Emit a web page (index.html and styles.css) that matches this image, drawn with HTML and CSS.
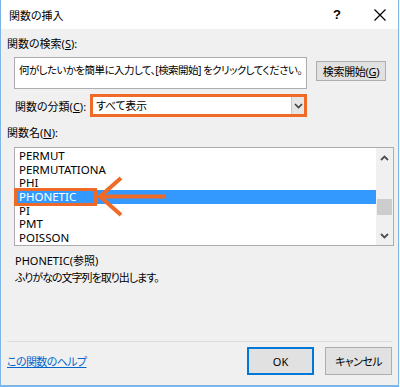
FILE: index.html
```html
<!DOCTYPE html>
<html lang="ja">
<head>
    <meta charset="UTF-8">
    <meta name="viewport" content="width=device-width, initial-scale=1.0">
    <title>関数の挿入</title>
    <link rel="stylesheet" href="styles.css">
</head>
<body>
    <div class="window">
        <div class="titlebar">
            <span class="title">関数の挿入</span>
            <span class="help">?</span>
            <span class="close">
                <svg width="12" height="12" viewBox="0 0 12 12"><path d="M0.5 0.5 L11.5 11.5 M11.5 0.5 L0.5 11.5" stroke="#000" stroke-width="1.2" fill="none"/></svg>
            </span>
        </div>

        <div class="content">
            <div class="label">関数の検索(<u>S</u>):</div>
            <div class="search-row">
                <div class="textbox">何がしたいかを簡単に入力して、[検索開始] をクリックしてください。</div>
                <div class="button search-btn">検索開始(<u>G</u>)</div>
            </div>

            <div class="category-row">
                <span class="category-label">関数の分類(<u>C</u>):</span>
                <div class="dropdown">
                    <span class="dropdown-text">すべて表示</span>
                    <span class="dropdown-arrow">
                        <svg width="9" height="6" viewBox="0 0 9 6"><path d="M1 1 L4.5 4.5 L8 1" stroke="#404040" stroke-width="1.6" fill="none"/></svg>
                    </span>
                </div>
            </div>

            <div class="label names-label">関数名(<u>N</u>):</div>
            <div class="list-area">
                <div class="listbox">
                    <ul class="items">
                        <li>PERMUT</li>
                        <li>PERMUTATIONA</li>
                        <li>PHI</li>
                        <li class="selected">PHONETIC</li>
                        <li>PI</li>
                        <li>PMT</li>
                        <li>POISSON</li>
                    </ul>
                    <div class="scrollbar">
                        <svg class="scroll-up" width="9" height="6" viewBox="0 0 9 6"><path d="M1 5 L4.5 1.5 L8 5" stroke="#505050" stroke-width="1.8" fill="none"/></svg>
                        <div class="thumb"></div>
                        <svg class="scroll-down" width="9" height="6" viewBox="0 0 9 6"><path d="M1 1 L4.5 4.5 L8 1" stroke="#505050" stroke-width="1.8" fill="none"/></svg>
                    </div>
                </div>
                <div class="highlight-box"></div>
                <svg class="pointer-arrow" width="160" height="80" viewBox="0 0 160 80">
                    <path d="M86 49.5 H151" stroke="#ef6a27" stroke-width="4" fill="none"/>
                    <path d="M107 31 L86 49.5 L107 68" stroke="#ef6a27" stroke-width="4" fill="none" stroke-linejoin="miter"/>
                </svg>
            </div>

            <div class="description">
                <div>PHONETIC(参照)</div>
                <div class="jp">ふりがなの文字列を取り出します。</div>
            </div>
        </div>

        <div class="footer">
            <div class="separator"></div>
            <div class="footer-row">
                <a class="help-link" href="#">この関数のヘルプ</a>
                <div class="buttons">
                    <div class="button dialog-btn ok">OK</div>
                    <div class="button dialog-btn jp">キャンセル</div>
                </div>
            </div>
        </div>
    </div>
</body>
</html>
```

FILE: styles.css
```css
body { margin: 0; background: #fff; font-family: "Noto Sans", "Noto Sans CJK JP", sans-serif; font-size: 11.5px; color: #000; font-feature-settings: "palt"; }
u { text-decoration: underline; text-underline-offset: 1px; }
.jp { letter-spacing: -0.6px; }

.window { width: 399px; height: 387px; box-sizing: border-box; border: 1px solid #7fb5e6; border-top: none; border-bottom-width: 2px; background: #f0f0f0; display: flex; flex-direction: column; }

.titlebar { height: 29px; background: #fff; display: flex; align-items: center; padding: 0 3px 0 8px; }
.title { font-size: 11px; flex: 1; padding-top: 1px; }
.help { width: 16px; text-align: center; font-family: "Liberation Sans", sans-serif; font-weight: bold; font-size: 13px; margin-right: 20px; }
.close { width: 30px; display: flex; justify-content: center; padding-top: 1px; }

.content { flex: 1; padding-left: 6px; }
.label { line-height: 16px; margin-top: 7px; font-size: 11px; }
.names-label { margin-top: 8px; }

.search-row { display: flex; align-items: flex-start; margin-top: 5px; margin-left: 7px; }
.textbox { width: 293px; height: 32px; box-sizing: border-box; background: #fff; border: 1px solid #abadb3; padding: 4px 0 0 4px; line-height: 16px; font-size: 10.5px; letter-spacing: -0.55px; white-space: nowrap; overflow: hidden; }
.button { background: #e1e1e1; border: 1px solid #adadad; box-sizing: border-box; display: flex; align-items: center; justify-content: center; font-size: 11px; }
.search-btn { width: 70px; height: 20px; margin: 4px 0 0 9px; letter-spacing: -0.3px; }

.category-row { display: flex; align-items: center; margin-top: 5px; margin-left: 8px; height: 23px; }
.category-label { width: 75px; font-size: 11px; }
.dropdown { width: 217px; height: 23px; box-sizing: border-box; border: 3px solid #ef6a27; background: #fff; display: flex; align-items: stretch; }
.dropdown-text { flex: 1; padding-left: 3px; line-height: 17px; font-size: 11px; letter-spacing: -0.3px; }
.dropdown-arrow { width: 12px; background: #e5e5e5; border-left: 1px solid #c8c8c8; display: flex; align-items: center; justify-content: center; }

.list-area { position: relative; margin: 6px 0 0 7px; width: 380px; height: 99px; }
.listbox { height: 99px; box-sizing: border-box; border: 1px solid #abadb3; background: #fff; display: flex; }
.items { list-style: none; margin: 0; padding: 1px 0 0; flex: 1; }
.items li { height: 13.7px; line-height: 13.7px; padding-left: 4px; }
.items .selected { background: #3399ff; color: #fff; }
.scrollbar { width: 17px; background: #f0f0f0; display: flex; flex-direction: column; align-items: center; }
.scroll-up { margin-top: 7px; }
.thumb { width: 15px; height: 16px; background: #cdcdcd; margin-top: 38px; }
.scroll-down { margin-top: 18px; }
.highlight-box { position: absolute; left: 0; top: 41px; width: 83px; height: 18px; box-sizing: border-box; border: 3px solid #ef6a27; }
.pointer-arrow { position: absolute; left: 0; top: 0; }

.description { margin: 6px 0 0 8px; line-height: 17px; font-size: 11px; }
.description .jp { letter-spacing: -1px; }

.footer { padding: 0 6px 10px 6px; }
.separator { height: 1px; background: #dcdcdc; }
.footer-row { display: flex; align-items: center; justify-content: space-between; margin-top: 5px; height: 28px; }
.help-link { color: #0066cc; text-decoration: underline; font-size: 11px; letter-spacing: -0.6px; }
.buttons { display: flex; gap: 11px; }
.dialog-btn { width: 67px; height: 28px; }
.ok { border: 2px solid #0078d7; }
```
